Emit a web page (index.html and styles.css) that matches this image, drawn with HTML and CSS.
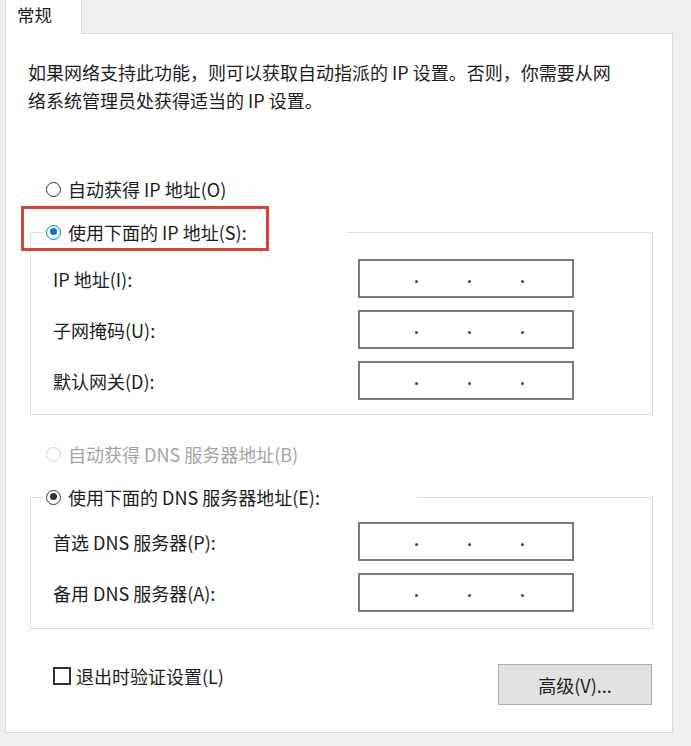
FILE: index.html
```html
<!DOCTYPE html>
<html lang="zh-CN">
<head>
  <meta charset="UTF-8">
  <title>Internet 协议版本 4 (TCP/IPv4) 属性</title>
  <link rel="stylesheet" href="styles.css">
</head>
<body>
  <div class="dialog">
    <!-- Tabs -->
    <div class="tabs">
      <div class="tab active">常规</div>
    </div>

    <div class="panel">
      <p class="intro">如果网络支持此功能，则可以获取自动指派的 IP 设置。否则，你需要从网<br>络系统管理员处获得适当的 IP 设置。</p>

      <label class="radio-row"><span class="radio"></span>自动获得 IP 地址(O)</label>

      <fieldset class="group group-ip">
        <legend class="group-title"><span class="radio checked blue"></span>使用下面的 IP 地址(S):</legend>
        <div class="field-row">
          <span class="field-label">IP 地址(I):</span>
          <div class="ip-box"><i></i><i></i><i></i></div>
        </div>
        <div class="field-row">
          <span class="field-label">子网掩码(U):</span>
          <div class="ip-box"><i></i><i></i><i></i></div>
        </div>
        <div class="field-row">
          <span class="field-label">默认网关(D):</span>
          <div class="ip-box"><i></i><i></i><i></i></div>
        </div>
      </fieldset>

      <label class="radio-row disabled"><span class="radio"></span>自动获得 DNS 服务器地址(B)</label>

      <fieldset class="group group-dns">
        <legend class="group-title"><span class="radio checked"></span>使用下面的 DNS 服务器地址(E):</legend>
        <div class="field-row">
          <span class="field-label">首选 DNS 服务器(P):</span>
          <div class="ip-box"><i></i><i></i><i></i></div>
        </div>
        <div class="field-row">
          <span class="field-label">备用 DNS 服务器(A):</span>
          <div class="ip-box"><i></i><i></i><i></i></div>
        </div>
      </fieldset>

      <div class="bottom-row">
        <label class="check-row"><span class="checkbox"></span>退出时验证设置(L)</label>
        <button class="btn">高级(V)...</button>
      </div>

      <!-- annotation -->
      <div class="highlight"></div>
    </div>
  </div>
</body>
</html>
```

FILE: styles.css
```css
body {
  margin: 0;
  background-color: #f0f0f0;
  font-family: "Noto Sans CJK SC", "Liberation Sans", sans-serif;
  font-size: 18px;
  color: #1c1c1c;
}

.dialog {
  padding-left: 5px;
  width: 668px;
}

/* Tabs */
.tabs {
  height: 33px;
  display: flex;
}
.tab {
  position: relative;
  z-index: 1;
  width: 77px;
  height: 34px;
  box-sizing: border-box;
  padding-left: 11px;
  font-size: 17.5px;
  line-height: 30px;
  background: #fff;
  border-left: 1px solid #d9d9d9;
  border-right: 1px solid #d9d9d9;
}
/* End Tabs */

.panel {
  position: relative;
  height: 700px;
  box-sizing: border-box;
  background: #fff;
  border: 1px solid #d9d9d9;
  padding-top: 24px;
}

.intro {
  margin: 0 0 0 22px;
  line-height: 28px;
}

.radio-row {
  display: flex;
  align-items: center;
  height: 28px;
  margin-left: 40px;
  gap: 7px;
}
.radio-row:first-of-type {
  margin-top: 61px;
}
.radio-row.disabled {
  margin-top: 25px;
  color: #a3a3a3;
}

.radio {
  display: inline-block;
  width: 15px;
  height: 15px;
  box-sizing: border-box;
  border: 1.5px solid #333;
  border-radius: 50%;
  position: relative;
  flex-shrink: 0;
}
.disabled .radio {
  border-color: #cfcfcf;
}
.radio.checked::after {
  content: "";
  position: absolute;
  left: 2.5px;
  top: 2.5px;
  width: 7px;
  height: 7px;
  border-radius: 50%;
  background: #333;
}
.radio.blue {
  border-color: #0078d7;
}
.radio.blue::after {
  background: #0078d7;
}

/* Group boxes */
.group {
  margin: 15px 0 0 24px;
  width: 623px;
  box-sizing: border-box;
  border: 1px solid #dedede;
  padding: 13px 0 14px 22px;
}
.group-dns {
  padding-top: 11px;
  padding-bottom: 16px;
}
.group-title {
  margin-left: -10px;
  padding: 0 0 0 3px;
  box-sizing: border-box;
  line-height: 28px;
  display: flex;
  align-items: center;
  gap: 7px;
}
.group-ip .group-title {
  width: 304px;
}
.group-dns .group-title {
  width: 374px;
}

.field-row {
  display: grid;
  grid-template-columns: 305px 216px;
  align-items: center;
  height: 39px;
}
.field-row + .field-row {
  margin-top: 12px;
}

.ip-box {
  height: 39px;
  box-sizing: border-box;
  border: 2px solid #7a7a7a;
  display: flex;
  align-items: center;
  padding: 6px 0 0 55px;
  gap: 50px;
}
.ip-box i {
  width: 3px;
  height: 3px;
  border-radius: 50%;
  background: #444;
}

/* Bottom */
.bottom-row {
  display: flex;
  justify-content: space-between;
  align-items: flex-start;
  margin-top: 33px;
  padding: 0 20px 0 47px;
}
.check-row {
  display: flex;
  align-items: center;
  gap: 5px;
  line-height: 28px;
}
.checkbox {
  width: 18px;
  height: 18px;
  box-sizing: border-box;
  border: 2px solid #333;
}
.btn {
  margin-top: 2px;
  width: 154px;
  height: 41px;
  background: #e1e1e1;
  border: 1px solid #adadad;
  font-family: inherit;
  font-size: 18px;
  color: #1c1c1c;
  padding: 0;
}

.highlight {
  position: absolute;
  left: 15px;
  top: 172px;
  width: 248px;
  height: 45px;
  box-sizing: border-box;
  border: 3px solid #d2453a;
}
```
